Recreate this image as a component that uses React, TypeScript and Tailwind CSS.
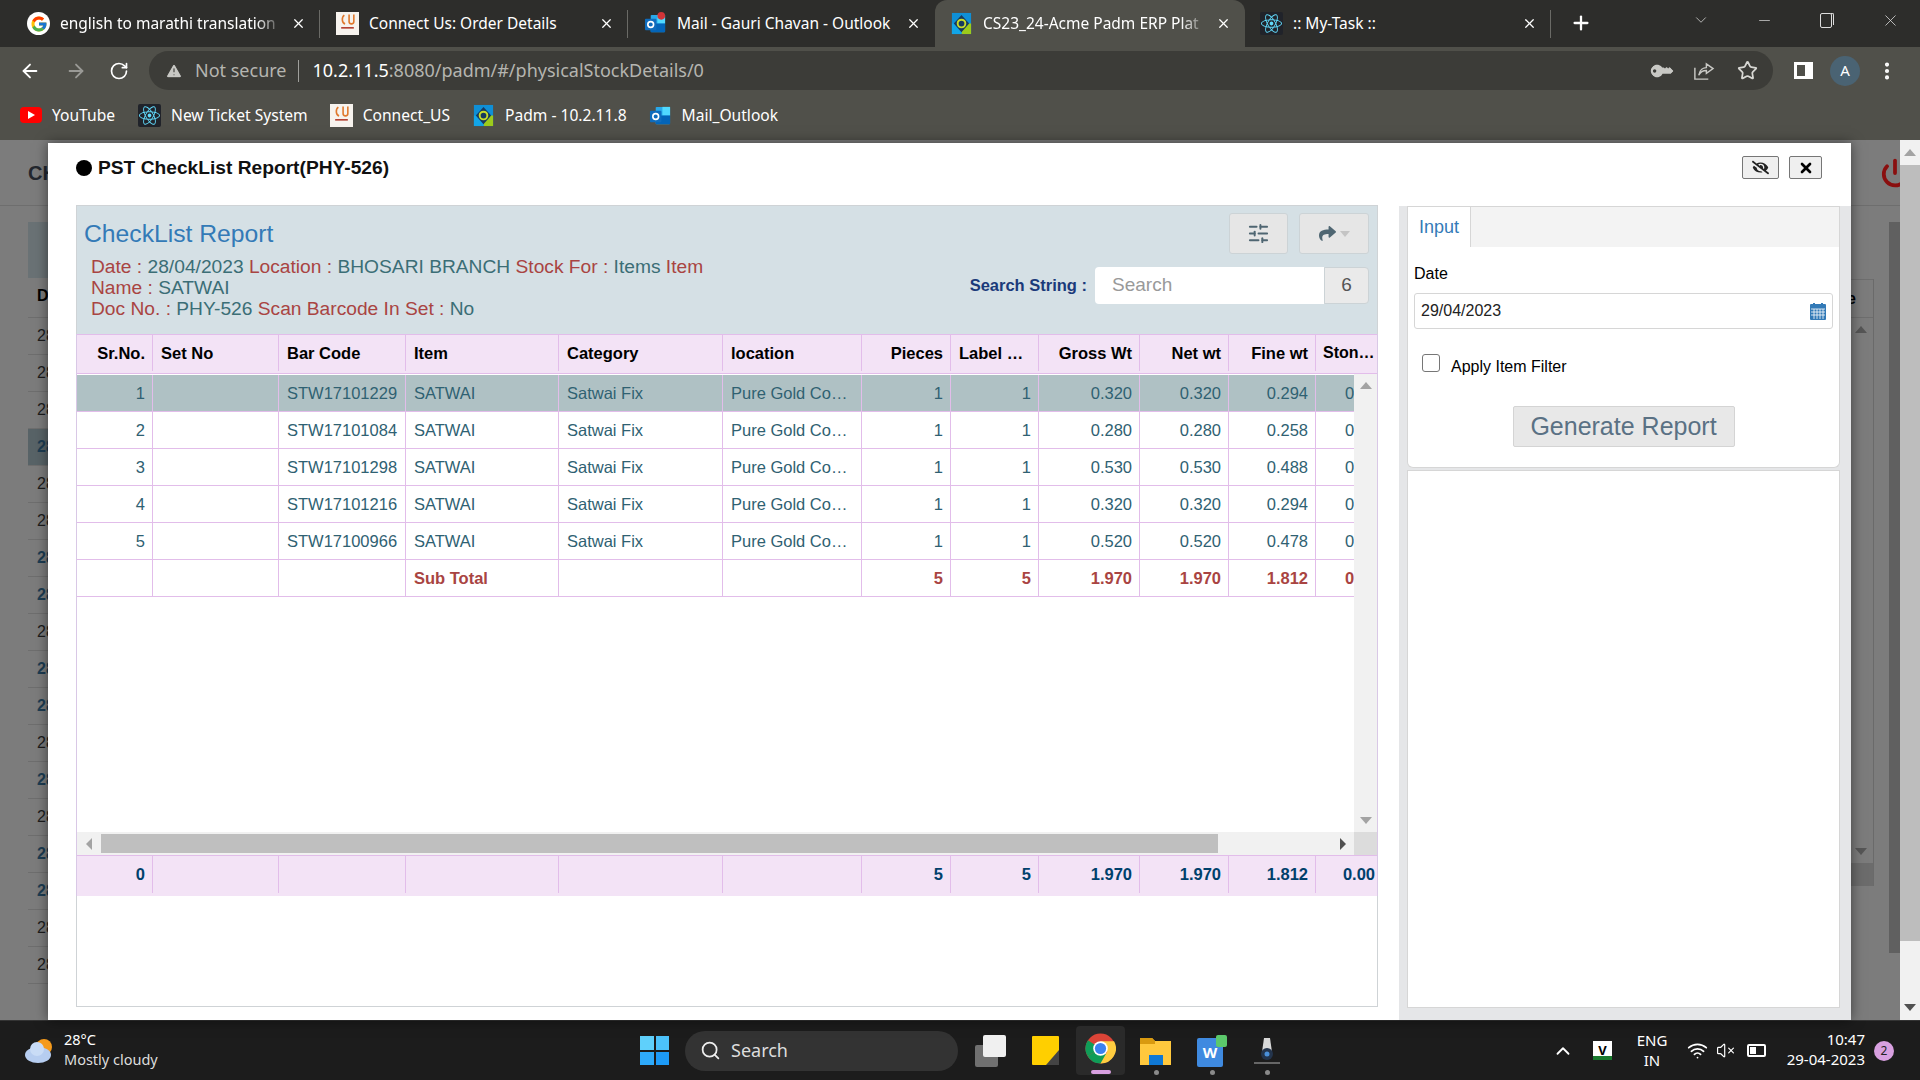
import React from 'react';
import {
  ArrowLeft, ArrowRight, RotateCw, X, Plus, ChevronDown, Minus, Star, ChevronUp,
  Wifi, VolumeX, Search, SlidersHorizontal, Power, TriangleAlert, EllipsisVertical,
} from 'lucide-react';
import { FaReact, FaShare, FaKey, FaEyeSlash } from 'react-icons/fa';
import { FcGoogle } from 'react-icons/fc';

const COLS = 'grid grid-cols-[76px_126px_127px_153px_164px_139px_89px_88px_101px_89px_87px_61px]';

const Outlook = ({ dot }: { dot?: boolean }) => (
  <svg viewBox="0 0 24 24" className="w-[23px] h-[23px] shrink-0">
    <rect x="7" y="3" width="15" height="18" rx="1" fill="#28a8ea" />
    <rect x="14" y="3" width="8" height="9" fill="#50d9ff" />
    <rect x="7" y="12" width="15" height="9" fill="#0364b8" />
    <rect x="1" y="7" width="12" height="12" rx="1" fill="#0f6cbd" />
    <circle cx="7" cy="13" r="3" fill="none" stroke="#fff" strokeWidth="1.7" />
    {dot && <circle cx="18" cy="4" r="4" fill="#d13438" />}
  </svg>
);

const Padm = () => (
  <svg viewBox="0 0 24 24" className="w-[23px] h-[23px] shrink-0">
    <rect x="2" y="1" width="20" height="22" fill="#0f8fd6" />
    <path d="M12 12L22 12L22 23L12 23Z" fill="#9ccb1c" />
    <path d="M2 12L12 12L12 23L2 23Z" fill="#12a5e8" />
    <path d="M12 3L20 12L12 21L4 12Z" fill="#17395f" />
    <circle cx="12" cy="12" r="4" fill="none" stroke="#c7dc2c" strokeWidth="2" />
  </svg>
);

const ConnectIcon = () => (
  <div className="w-[23px] h-[23px] shrink-0 bg-[#f7f3ee] flex items-start justify-center">
    <svg viewBox="0 0 24 24" className="w-[19px] h-[19px]">
      <path d="M8 4C4 7 5 14 9 15M14 3L14 12C14 16 20 16 20 12L20 3" fill="none" stroke="#e0782c" strokeWidth="2" />
      <rect x="4" y="19" width="16" height="2" fill="#b23b2c" />
    </svg>
  </div>
);

const ReactIcon = () => (
  <div className="w-[23px] h-[23px] shrink-0 bg-[#20232a] flex items-center justify-center rounded-[2px]">
    <FaReact className="w-[21px] h-[21px] text-[#61dafb]" />
  </div>
);

const GoogleIcon = () => (
  <div className="w-[23px] h-[23px] shrink-0 rounded-full bg-white flex items-center justify-center">
    <FcGoogle className="w-[18px] h-[18px]" />
  </div>
);

const YouTubeIcon = () => (
  <div className="w-[22px] h-[16px] shrink-0 rounded-[4px] bg-[#f00] flex items-center justify-center">
    <div className="border-y-[4px] border-l-[7px] border-y-transparent border-l-white" />
  </div>
);

function ChromeTab({ width, icon, title, fade, active, divider, pl }: {
  width: string; icon: React.ReactNode; title: string; fade?: boolean; active?: boolean; divider?: boolean; pl: string;
}) {
  return (
    <div className={`${width} ${pl} ${active ? 'bg-[#50504a] rounded-t-[12px]' : ''} h-full relative flex items-center shrink-0 pr-[14px]`}>
      {icon}
      <span className={`ml-[10px] flex-1 min-w-0 overflow-hidden whitespace-nowrap text-[15.5px] text-white ${fade ? '[mask-image:linear-gradient(to_right,black_88%,transparent)]' : ''}`}>
        {title}
      </span>
      <X className="w-[15px] h-[15px] text-white shrink-0 ml-[8px]" strokeWidth={2} />
      {divider && <div className="absolute right-0 top-[10px] h-[28px] w-px bg-[#6a6a66]" />}
    </div>
  );
}

function TabBar() {
  return (
    <div className="h-[47px] bg-[#2d2d2b] flex shrink-0 relative">
      <ChromeTab width="w-[320px]" pl="pl-[27px]" icon={<GoogleIcon />} title="english to marathi translation" fade divider />
      <ChromeTab width="w-[308px]" pl="pl-[16px]" icon={<ConnectIcon />} title="Connect Us: Order Details" divider />
      <ChromeTab width="w-[307px]" pl="pl-[16px]" icon={<Outlook dot />} title="Mail - Gauri Chavan - Outlook" />
      <ChromeTab width="w-[310px]" pl="pl-[15px]" icon={<Padm />} title="CS23_24-Acme Padm ERP Plat" fade active />
      <ChromeTab width="w-[306px]" pl="pl-[15px]" icon={<ReactIcon />} title=":: My-Task ::" divider />
      <Plus className="w-[22px] h-[22px] text-white ml-[19px] mt-[12px]" strokeWidth={2.5} />
      <ChevronDown className="w-[18px] h-[18px] text-[#ddd] ml-[100px] mt-[11px]" strokeWidth={1} />
      <Minus className="w-[17px] h-[17px] text-[#ddd] ml-[46px] mt-[12px]" strokeWidth={1} />
      <div className="ml-[47px] mt-[13px] w-[12px] h-[15px] relative border border-[#ddd] rounded-[2px]">
        <div className="absolute -right-[3px] -top-px w-[3px] h-[12px] border-t border-r border-[#ddd] rounded-tr-[2px]" />
      </div>
      <X className="w-[19px] h-[19px] text-[#ddd] ml-[49px] mt-[11px]" strokeWidth={1} />
    </div>
  );
}

function Toolbar() {
  return (
    <div className="h-[47px] bg-[#50504a] flex items-center shrink-0">
      <ArrowLeft className="w-[22px] h-[22px] text-white ml-[19px]" strokeWidth={2} />
      <ArrowRight className="w-[22px] h-[22px] text-[#9a9a96] ml-[24px]" strokeWidth={2} />
      <RotateCw className="w-[20px] h-[20px] text-white ml-[22px]" strokeWidth={2} />
      <div className="ml-[20px] w-[1624px] h-[39px] rounded-full bg-[#3c3c38] flex items-center">
        <TriangleAlert className="w-[18px] h-[18px] text-[#c8c8c4] ml-[16px]" fill="#c8c8c4" stroke="#3c3c38" strokeWidth={1.5} />
        <span className="ml-[12px] text-[18px] text-[#b5b5b0]">Not secure</span>
        <div className="ml-[11px] w-px h-[22px] bg-[#a0a09c]" />
        <span className="ml-[14px] text-[18px] text-white">10.2.11.5<span className="text-[#b5b5b0]">:8080/padm/#/physicalStockDetails/0</span></span>
        <div className="flex-1" />
        <FaKey className="w-[18px] h-[18px] text-[#c8c8c4] rotate-[-135deg]" />
        <svg viewBox="0 0 24 24" className="w-[23px] h-[23px] ml-[22px] text-[#c8c8c4]" fill="none" stroke="currentColor" strokeWidth="1.5">
          <path d="M3 9V21H17" />
          <path d="M7 17C8 11 12 9 15 9V5L22 10L15 15V12C12 12 9 13 7 17Z" />
        </svg>
        <Star className="w-[21px] h-[21px] text-[#d8d8d4] ml-[22px] mr-[15px]" strokeWidth={2} />
      </div>
      <div className="ml-[21px] w-[19px] h-[17px] border-[3px] border-r-[8px] border-white" />
      <div className="ml-[17px] w-[30px] h-[30px] rounded-full bg-[#4a6373] text-white text-[15px] flex items-center justify-center">A</div>
      <EllipsisVertical className="w-[22px] h-[22px] text-white ml-[16px]" strokeWidth={2.5} />
    </div>
  );
}

function Bookmark({ icon, label, ml }: { icon: React.ReactNode; label: string; ml: string }) {
  return (
    <div className={`flex items-center ${ml}`}>
      {icon}
      <span className="ml-[10px] text-[15.6px] text-white whitespace-nowrap">{label}</span>
    </div>
  );
}

function Bookmarks() {
  return (
    <div className="h-[46px] bg-[#50504a] flex items-center shrink-0 pb-[3px]">
      <Bookmark ml="ml-[20px]" icon={<YouTubeIcon />} label="YouTube" />
      <Bookmark ml="ml-[23px]" icon={<ReactIcon />} label="New Ticket System" />
      <Bookmark ml="ml-[22px]" icon={<ConnectIcon />} label="Connect_US" />
      <Bookmark ml="ml-[22px]" icon={<Padm />} label="Padm - 10.2.11.8" />
      <Bookmark ml="ml-[22px]" icon={<Outlook />} label="Mail_Outlook" />
    </div>
  );
}

const BACK_ROWS = [0, 0, 0, 2, 0, 0, 1, 1, 0, 1, 1, 0, 1, 0, 1, 1, 0, 0];

// dimmed page that sits behind the modal
function BackPage() {
  return (
    <div className="h-full bg-[#7c7c7c] flex font-['Liberation_Sans',Arial,sans-serif]">
      <div className="flex-1 min-w-0 flex flex-col overflow-hidden">
        <div className="h-[66px] border-b border-[#6e6e6e] shrink-0 flex items-center pl-[28px] justify-between">
          <span className="text-[20px] font-bold text-[#23272e]">CH</span>
          <Power className="w-[30px] h-[30px] text-[#8a0f0f] -mr-[10px]" strokeWidth={3} />
        </div>
        <div className="flex-1 min-h-0 flex pl-[28px] pt-[16px]">
          <div className="w-[60px] flex flex-col">
            <div className="h-[56px] bg-[#6a7275] shrink-0" />
            <div className="h-[40px] shrink-0 border-b border-[#6e6e6e] pl-[9px] pb-[3px] flex items-center text-[16px] font-bold text-black">D</div>
            {BACK_ROWS.map((kind, i) => (
              <div
                key={i}
                className={`h-[37px] shrink-0 border-b border-[#6e6e6e] pl-[9px] flex items-center text-[16px] ${kind === 2 ? 'bg-[#586367] text-[#1d3c52] font-bold' : kind === 1 ? 'text-[#1d3c52] font-bold' : 'text-[#1c1c1c]'}`}
              >
                28
              </div>
            ))}
          </div>
          <div className="flex-1" />
          <div className="w-[60px] h-[607px] mt-[57px] border-r border-[#6a6a6a] flex flex-col">
            <div className="h-[39px] shrink-0 border-y border-[#6e6e6e] flex items-center justify-end pr-[17px] text-[16px] font-bold text-black">e</div>
            <div className="flex-1 flex flex-col items-end justify-between pr-[6px] py-[8px]">
              <div className="border-x-[6px] border-b-[7px] border-x-transparent border-b-[#565656]" />
              <div className="border-x-[6px] border-t-[7px] border-x-transparent border-t-[#565656]" />
            </div>
            <div className="h-[23px] shrink-0 bg-[#6c6c6c]" />
          </div>
          <div className="w-[15px] shrink-0" />
          <div className="w-[11px] shrink-0 bg-[#606060] h-[731px]" />
        </div>
      </div>
      <div className="w-[20px] shrink-0 bg-[#f1f1f1] flex flex-col items-center">
        <div className="h-[25px] flex items-center shrink-0">
          <div className="border-x-[6px] border-b-[7px] border-x-transparent border-b-[#a3a3a3]" />
        </div>
        <div className="h-[776px] w-full bg-[#bdbdbd] shrink-0" />
        <div className="flex-1" />
        <div className="border-x-[6px] border-t-[7px] border-x-transparent border-t-[#505050] mb-[9px]" />
      </div>
    </div>
  );
}

type Row = { sr: string; code: string; pieces: string; gross: string; net: string; fine: string };

const ROWS: Row[] = [
  { sr: '1', code: 'STW17101229', pieces: '1', gross: '0.320', net: '0.320', fine: '0.294' },
  { sr: '2', code: 'STW17101084', pieces: '1', gross: '0.280', net: '0.280', fine: '0.258' },
  { sr: '3', code: 'STW17101298', pieces: '1', gross: '0.530', net: '0.530', fine: '0.488' },
  { sr: '4', code: 'STW17101216', pieces: '1', gross: '0.320', net: '0.320', fine: '0.294' },
  { sr: '5', code: 'STW17100966', pieces: '1', gross: '0.520', net: '0.520', fine: '0.478' },
];

const cell = 'border-r border-[#e2bdea] min-w-0 overflow-hidden whitespace-nowrap flex items-center';
const L = `${cell} pl-[8px] pr-[8px]`;
const R = `${cell} justify-end pr-[7px]`;
const LAST = 'min-w-0 whitespace-nowrap flex items-center justify-end pr-[2px]';
// the Ston column runs under the scrollbar, only its first digit shows
const CLIPPED = 'min-w-0 whitespace-nowrap flex items-center pl-[29px]';

function DataRow({ r, selected }: { r: Row; selected?: boolean }) {
  return (
    <div className={`${COLS} w-[1300px] h-[37px] border-b border-[#e2bdea] text-[16.5px] text-[#2f6172] ${selected ? 'bg-[#afc1c4]' : ''}`}>
      <div className={R}>{r.sr}</div>
      <div className={L}></div>
      <div className={L}>{r.code}</div>
      <div className={L}>SATWAI</div>
      <div className={L}>Satwai Fix</div>
      <div className={L}><span className="truncate max-w-[117px]">Pure Gold Coins</span></div>
      <div className={R}>{r.pieces}</div>
      <div className={R}>1</div>
      <div className={R}>{r.gross}</div>
      <div className={R}>{r.net}</div>
      <div className={R}>{r.fine}</div>
      <div className={CLIPPED}>0.00</div>
    </div>
  );
}

function ReportTable() {
  return (
    <div className="-mx-px shrink-0 border-x border-[#d9c8e6] flex flex-col">
      <div className={`${COLS} h-[40px] shrink-0 bg-[#f3e3f6] border-y border-[#e2bdea] pb-[2px] text-[16.5px] font-bold text-black`}>
        <div className={R}>Sr.No.</div>
        <div className={L}>Set No</div>
        <div className={L}>Bar Code</div>
        <div className={L}>Item</div>
        <div className={L}>Category</div>
        <div className={L}>location</div>
        <div className={R}>Pieces</div>
        <div className={L}><span className="truncate">Label Pieces</span></div>
        <div className={R}>Gross Wt</div>
        <div className={R}>Net wt</div>
        <div className={R}>Fine wt</div>
        <div className="pl-[7px] flex items-center min-w-0 text-[16px]"><span className="truncate">Stone Wt</span></div>
      </div>
      <div className="h-[458px] shrink-0 flex">
        <div className="flex-1 min-w-0 overflow-hidden pt-px">
          {ROWS.map((r, i) => <DataRow key={r.sr} r={r} selected={i === 0} />)}
          <div className={`${COLS} w-[1300px] h-[37px] border-b border-[#e2bdea] text-[16.5px] font-bold text-[#a94442]`}>
            <div className={R}></div>
            <div className={L}></div>
            <div className={L}></div>
            <div className={L}>Sub Total</div>
            <div className={L}></div>
            <div className={L}></div>
            <div className={R}>5</div>
            <div className={R}>5</div>
            <div className={R}>1.970</div>
            <div className={R}>1.970</div>
            <div className={R}>1.812</div>
            <div className={CLIPPED}>0.00</div>
          </div>
        </div>
        <div className="w-[23px] shrink-0 bg-[#f1f1f1] flex flex-col items-center justify-between py-[8px]">
          <div className="border-x-[6px] border-b-[7px] border-x-transparent border-b-[#a3a3a3]" />
          <div className="border-x-[6px] border-t-[7px] border-x-transparent border-t-[#a3a3a3]" />
        </div>
      </div>
      <div className="h-[23px] shrink-0 bg-[#f1f1f1] flex items-center">
        <div className="w-[24px] flex justify-center">
          <div className="border-y-[6px] border-r-[6px] border-y-transparent border-r-[#a3a3a3]" />
        </div>
        <div className="w-[1117px] h-[19px] bg-[#bfbfbf]" />
        <div className="flex-1 flex justify-end pr-[8px]">
          <div className="border-y-[6px] border-l-[6px] border-y-transparent border-l-[#505050]" />
        </div>
        <div className="w-[23px] h-full bg-[#dcdcdc]" />
      </div>
      <div className={`${COLS} h-[41px] shrink-0 bg-[#f3e3f6] border-t border-[#e2bdea] pb-[3px] text-[16.5px] font-bold text-[#00406b]`}>
        <div className={R}>0</div>
        <div className={L}></div>
        <div className={L}></div>
        <div className={L}></div>
        <div className={L}></div>
        <div className={L}></div>
        <div className={R}>5</div>
        <div className={R}>5</div>
        <div className={R}>1.970</div>
        <div className={R}>1.970</div>
        <div className={R}>1.812</div>
        <div className={LAST}>0.00</div>
      </div>
    </div>
  );
}

function ReportPanel() {
  const k = 'text-[#a94442]';
  const v = 'text-[#3b6e76]';
  return (
    <div className="w-[1302px] shrink-0 mb-[13px] border border-[#cfd3d6] flex flex-col">
      <div className="h-[128px] shrink-0 bg-[#d5e0e5] flex justify-between">
        <div className="pl-[7px] pt-[12px] w-[670px]">
          <h3 className="text-[24.7px] leading-[32px] text-[#337ab7]">CheckList Report</h3>
          <p className="mt-[6px] ml-[7px] text-[19.2px] leading-[21px] w-[640px]">
            <span className={k}>Date : </span><span className={v}>28/04/2023 </span>
            <span className={k}>Location : </span><span className={v}>BHOSARI BRANCH </span>
            <span className={k}>Stock For : </span><span className={v}>Items </span>
            <span className={k}>Item Name : </span><span className={v}>SATWAI</span>
            <br />
            <span className={k}>Doc No. : </span><span className={v}>PHY-526 </span>
            <span className={k}>Scan Barcode In Set : </span><span className={v}>No</span>
          </p>
        </div>
        <div className="flex flex-col items-end pr-[8px] pt-[7px]">
          <div className="flex gap-[11px]">
            <div className="w-[59px] h-[41px] bg-[#e6e6e6] border border-[#ccd3d6] rounded-[3px] flex items-center justify-center">
              <SlidersHorizontal className="w-[23px] h-[23px] text-[#4f6672]" strokeWidth={2} />
            </div>
            <div className="w-[70px] h-[41px] bg-[#e6e6e6] border border-[#ccd3d6] rounded-[3px] flex items-center justify-center gap-[4px]">
              <FaShare className="w-[17px] h-[17px] text-[#4f6672]" />
              <div className="border-x-[5px] border-t-[6px] border-x-transparent border-t-[#c4c4c4]" />
            </div>
          </div>
          <div className="mt-[13px] flex items-center">
            <span className="text-[16.5px] font-bold text-[#1b3a7a] mr-[8px]">Search String :</span>
            <div className="w-[229px] h-[37px] bg-white rounded-l-[4px] flex items-center pl-[17px] text-[19px] text-[#999]">Search</div>
            <div className="w-[45px] h-[37px] bg-[#eaeaea] border border-[#ccd3d6] rounded-r-[4px] flex items-center justify-center text-[19px] text-[#555]">6</div>
          </div>
        </div>
      </div>
      <ReportTable />
    </div>
  );
}

function InputPanel() {
  return (
    <div className="w-[452px] shrink-0 ml-[21px] mt-px bg-[#e5e6e8] pl-[8px] pr-[11px] pb-[12px] flex flex-col">
      <div className="h-[41px] shrink-0 bg-[#f3f3f3] border-x border-t border-[#d6d6d6] flex">
        <div className="w-[63px] h-[41px] bg-white border-r border-[#d6d6d6] flex items-center justify-center text-[18px] text-[#337ab7]">Input</div>
      </div>
      <div className="h-[221px] shrink-0 bg-white border-x border-b border-[#d6d6d6] rounded-b-[6px] px-[6px] pt-[17px] flex flex-col">
        <label className="text-[16px] leading-[20px] text-black">Date</label>
        <div className="mt-[9px] h-[36px] border border-[#d6d6d6] rounded-[3px] flex items-center justify-between pl-[6px] pr-[6px] text-[16px] text-[#222]">
          <span>29/04/2023</span>
          <svg viewBox="0 0 16 17" className="w-[16px] h-[17px]">
            <rect x="0" y="1" width="16" height="16" rx="1" fill="#337ab7" />
            <rect x="3" y="0" width="2" height="2" fill="#337ab7" />
            <rect x="11" y="0" width="2" height="2" fill="#337ab7" />
            <path d="M1 6H15M1 9H15M1 12H15M4 6V16M7 6V16M10 6V16M13 6V16" stroke="#fff" strokeWidth="0.8" />
          </svg>
        </div>
        <div className="mt-[23px] ml-[8px] flex items-center">
          <div className="w-[18px] h-[18px] -mt-[5px] border border-[#767676] rounded-[3px] bg-white" />
          <span className="ml-[11px] mt-[3px] text-[16px] text-black">Apply Item Filter</span>
        </div>
        <div className="mt-[27px] self-center w-[222px] h-[41px] bg-[#e8e8e8] border border-[#d4d4d4] rounded-[2px] flex items-center justify-center text-[25px] text-[#5a7184]">
          Generate Report
        </div>
      </div>
      <div className="flex-1 mt-[2px] bg-white border border-[#d6d6d6]" />
    </div>
  );
}

function Modal() {
  return (
    <div className="absolute left-[48px] top-[3px] w-[1803px] h-[877px] bg-white shadow-[0_0_12px_rgba(0,0,0,0.5)] flex flex-col font-['Liberation_Sans',Arial,sans-serif]">
      <div className="h-[62px] shrink-0 flex items-start justify-between pl-[28px] pr-[29px]">
        <div className="flex items-center mt-[15px]">
          <div className="w-[16px] h-[16px] rounded-full bg-black" />
          <span className="ml-[6px] text-[19.2px] leading-[20px] font-bold text-[#111]">PST CheckList Report(PHY-526)</span>
        </div>
        <div className="flex gap-[10px] mt-[13px]">
          <div className="w-[37px] h-[23px] bg-[#efefef] border border-[#767676] rounded-[2px] flex items-center justify-center">
            <FaEyeSlash className="w-[17px] h-[17px] text-[#222]" />
          </div>
          <div className="w-[33px] h-[23px] bg-[#efefef] border border-[#767676] rounded-[2px] flex items-center justify-center">
            <X className="w-[16px] h-[16px] text-black" strokeWidth={4} />
          </div>
        </div>
      </div>
      <div className="flex-1 min-h-0 flex pl-[28px]">
        <ReportPanel />
        <InputPanel />
      </div>
    </div>
  );
}

function TaskIcon({ children, dot, ml }: { children: React.ReactNode; dot?: boolean; ml: string }) {
  return (
    <div className={`${ml} h-[60px] relative flex items-center justify-center shrink-0`}>
      {children}
      {dot && <div className="absolute left-1/2 -ml-[2px] top-[49px] w-[5px] h-[5px] rounded-full bg-[#8a8a8a]" />}
    </div>
  );
}

function Taskbar() {
  return (
    <div className="h-[60px] bg-[#1c1c1c] border-t border-[#333] shrink-0 flex items-center text-white font-['Noto_Sans',sans-serif]">
      <svg viewBox="0 0 32 26" className="w-[32px] h-[26px] ml-[24px]">
        <circle cx="20" cy="9" r="8" fill="#f59a1b" />
        <ellipse cx="14" cy="17" rx="13" ry="8" fill="#b6cdf0" />
        <circle cx="13" cy="11" r="7" fill="#c9dcf6" />
      </svg>
      <div className="ml-[8px] w-[120px] text-[14.5px] leading-[20px] -mt-[4px]">
        <div>28°C</div>
        <div className="text-[#ddd] whitespace-nowrap">Mostly cloudy</div>
      </div>
      <div className="ml-[456px] w-[29px] h-[29px] grid grid-cols-2 gap-[2px]">
        <div className="bg-[#5fd0fb]" /><div className="bg-[#4cc2fa]" />
        <div className="bg-[#2eaafa]" /><div className="bg-[#1d9bf7]" />
      </div>
      <div className="ml-[16px] w-[273px] h-[40px] rounded-full bg-[#333] flex items-center">
        <Search className="w-[21px] h-[21px] text-[#eee] ml-[15px]" strokeWidth={2} />
        <span className="ml-[10px] text-[18px] text-[#ddd]">Search</span>
      </div>
      <TaskIcon ml="ml-[17px]">
        <div className="relative w-[31px] h-[32px]">
          <div className="absolute left-0 bottom-0 w-[23px] h-[22px] bg-[#707070] rounded-[2px]" />
          <div className="absolute right-0 top-0 w-[23px] h-[22px] bg-[#f0f0f0] rounded-[2px]" />
        </div>
      </TaskIcon>
      <TaskIcon ml="ml-[26px]">
        <svg viewBox="0 0 27 29" className="w-[27px] h-[29px]">
          <rect width="27" height="29" rx="1" fill="#ffcf00" />
          <path d="M27 14L27 29L14 29Z" fill="#444" />
        </svg>
      </TaskIcon>
      <div className="ml-[17px] w-[49px] h-[49px] rounded-[4px] bg-[#2a2a2a] relative flex items-center justify-center">
        <svg viewBox="0 0 32 32" className="w-[31px] h-[31px] -mt-[4px]">
          <circle cx="16" cy="16" r="15.5" fill="#db4437" />
          <path d="M16 16L2.6 23.8A15.5 15.5 0 0 1 3 7.5Z" fill="#0f9d58" />
          <path d="M16 16L2.6 23.8A15.5 15.5 0 0 0 16 31.5L24 24Z" fill="#0f9d58" />
          <path d="M16 8.5H30A15.5 15.5 0 0 1 16 31.5L23 19Z" fill="#ffcd40" />
          <circle cx="16" cy="16" r="7.5" fill="#fff" />
          <circle cx="16" cy="16" r="5.8" fill="#3b82f0" />
        </svg>
        <div className="absolute bottom-[1px] left-[15px] w-[20px] h-[4px] rounded-full bg-[#d8a0e0]" />
      </div>
      <TaskIcon ml="ml-[15px]" dot>
        <svg viewBox="0 0 31 29" className="w-[31px] h-[29px]">
          <path d="M0 2H12L15 5H31V29H0Z" fill="#ffc83d" />
          <path d="M0 2H12L15 5V8H0Z" fill="#d99a10" />
          <rect x="9" y="19" width="14" height="10" fill="#0f78d4" />
        </svg>
      </TaskIcon>
      <TaskIcon ml="ml-[26px]" dot>
        <div className="relative w-[30px] h-[32px]">
          <div className="absolute left-0 bottom-0 w-[26px] h-[29px] bg-[#3f8ae0] rounded-[2px] flex items-center justify-center text-[15px] font-bold">W</div>
          <div className="absolute right-0 top-0 w-[11px] h-[12px] bg-[#5bc86b] rounded-[2px]" />
        </div>
      </TaskIcon>
      <TaskIcon ml="ml-[26px]" dot>
        <svg viewBox="0 0 28 30" className="w-[28px] h-[30px]">
          <path d="M11 2H17L19 16H9Z" fill="#d8d8d8" />
          <circle cx="14" cy="18" r="6" fill="#23344c" />
          <circle cx="14" cy="18" r="2.5" fill="#4a90d9" />
          <rect x="1" y="26" width="26" height="2" fill="#666" />
        </svg>
      </TaskIcon>
      <ChevronUp className="w-[22px] h-[22px] text-white ml-[271px]" strokeWidth={2} />
      <div className="ml-[19px] w-[19px] h-[19px] bg-white relative flex items-center justify-center text-[13px] font-bold text-black">
        V
        <div className="absolute left-0 bottom-0 w-full h-[4px] bg-[#1a7a2e]" />
      </div>
      <div className="ml-[21px] w-[38px] text-center text-[15px] leading-[20px] -mt-[2px]">
        <div>ENG</div>
        <div>IN</div>
      </div>
      <Wifi className="w-[21px] h-[21px] text-white ml-[16px]" strokeWidth={2} />
      <VolumeX className="w-[19px] h-[19px] text-white ml-[8px]" strokeWidth={1.5} />
      <div className="ml-[12px] w-[19px] h-[13px] border-2 border-white rounded-[2px] relative">
        <div className="absolute left-[1px] top-[1px] w-[6px] h-[7px] bg-white" />
      </div>
      <div className="ml-[15px] w-[84px] text-right text-[15px] leading-[20px] -mt-[4px]">
        <div>10:47</div>
        <div className="whitespace-nowrap">29-04-2023</div>
      </div>
      <div className="ml-[9px] w-[20px] h-[20px] rounded-full bg-[#d8a0e0] text-[#222] text-[12px] flex items-center justify-center">2</div>
    </div>
  );
}

export default function App() {
  return (
    <div className="w-[1920px] h-[1080px] overflow-hidden flex flex-col font-['Noto_Sans',sans-serif]">
      <TabBar />
      <Toolbar />
      <Bookmarks />
      <div className="flex-1 min-h-0 relative">
        <BackPage />
        <Modal />
      </div>
      <Taskbar />
    </div>
  );
}
